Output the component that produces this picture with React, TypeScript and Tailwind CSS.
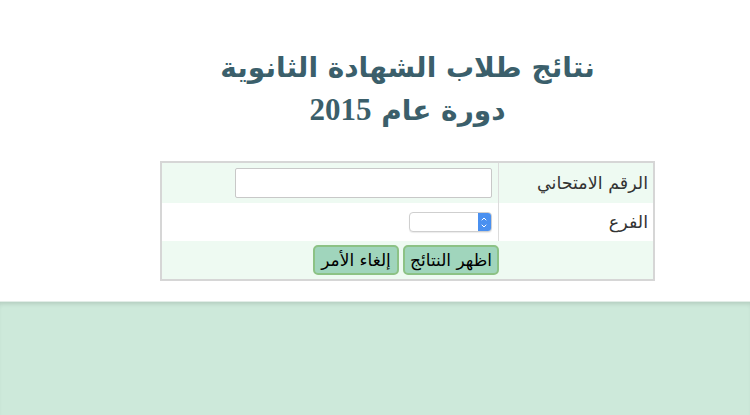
import { ChevronUp, ChevronDown } from 'lucide-react';

export default function App() {
  return (
    <div dir="rtl" className="w-[750px] h-[415px] overflow-hidden bg-white flex flex-col" style={{ fontFamily: '"DejaVu Sans", sans-serif' }}>
      {/* Header + form */}
      <div className="h-[301px] shrink-0 flex justify-center pl-[65px] pt-[47px]">
        <div className="flex flex-col items-center">
          <h1 className="text-[#3b5f6b] font-bold text-[28px] leading-[42px] text-center">
            <div>نتائج طلاب الشهادة الثانوية</div>
            <div>
              دورة عام <span style={{ fontFamily: '"Liberation Serif", serif' }} className="text-[31px]">2015</span>
            </div>
          </h1>

          <table className="mt-[29px] w-[495px] border-2 border-[#d6d6d6] border-collapse text-[17.5px] text-[#333]">
            <tbody>
              <tr className="bg-[#eefaf2] h-[41px]">
                <td className="w-[156px] pr-[5px] text-right border-l border-[#dcdcdc] align-middle">الرقم الامتحاني</td>
                <td className="pr-[6px]">
                  <input className="block w-[257px] h-[30px] border border-[#c8c8c8] rounded-[2px] bg-white outline-none" />
                </td>
              </tr>
              <tr className="bg-white h-[38px]">
                <td className="w-[156px] pr-[5px] text-right border-l border-[#dcdcdc] align-middle">الفرع</td>
                <td className="pr-[6px]">
                  <div dir="ltr" className="w-[83px] h-[20px] border border-[#cfcfcf] rounded-[4px] bg-white flex justify-end overflow-hidden shadow-[0_1px_1px_rgba(0,0,0,0.08)]">
                    <div className="w-[13px] h-full bg-[#4a90f0] flex flex-col items-center justify-center text-white">
                      <ChevronUp size={8} strokeWidth={3} className="-mb-[1px]" />
                      <ChevronDown size={8} strokeWidth={3} />
                    </div>
                  </div>
                </td>
              </tr>
              <tr className="bg-[#eefaf2] h-[39px]">
                <td className="w-[156px]"></td>
                <td>
                  <div className="flex gap-[4px] -mr-[1px]">
                    <button className="h-[30px] w-[96px] bg-[#a0d5bc] border-2 border-[#8cc285] rounded-[5px] text-[17px] text-black leading-none">اظهر النتائج</button>
                    <button className="h-[30px] w-[86px] bg-[#a0d5bc] border-2 border-[#8cc285] rounded-[5px] text-[17px] text-black leading-none">إلغاء الأمر</button>
                  </div>
                </td>
              </tr>
            </tbody>
          </table>
        </div>
      </div>

      {/* Footer band */}
      <div className="flex-1 bg-[#cde9da] border-t border-[#e2ede7] shadow-[inset_0_4px_4px_-2px_rgba(0,0,0,0.12)]" />
    </div>
  );
}
